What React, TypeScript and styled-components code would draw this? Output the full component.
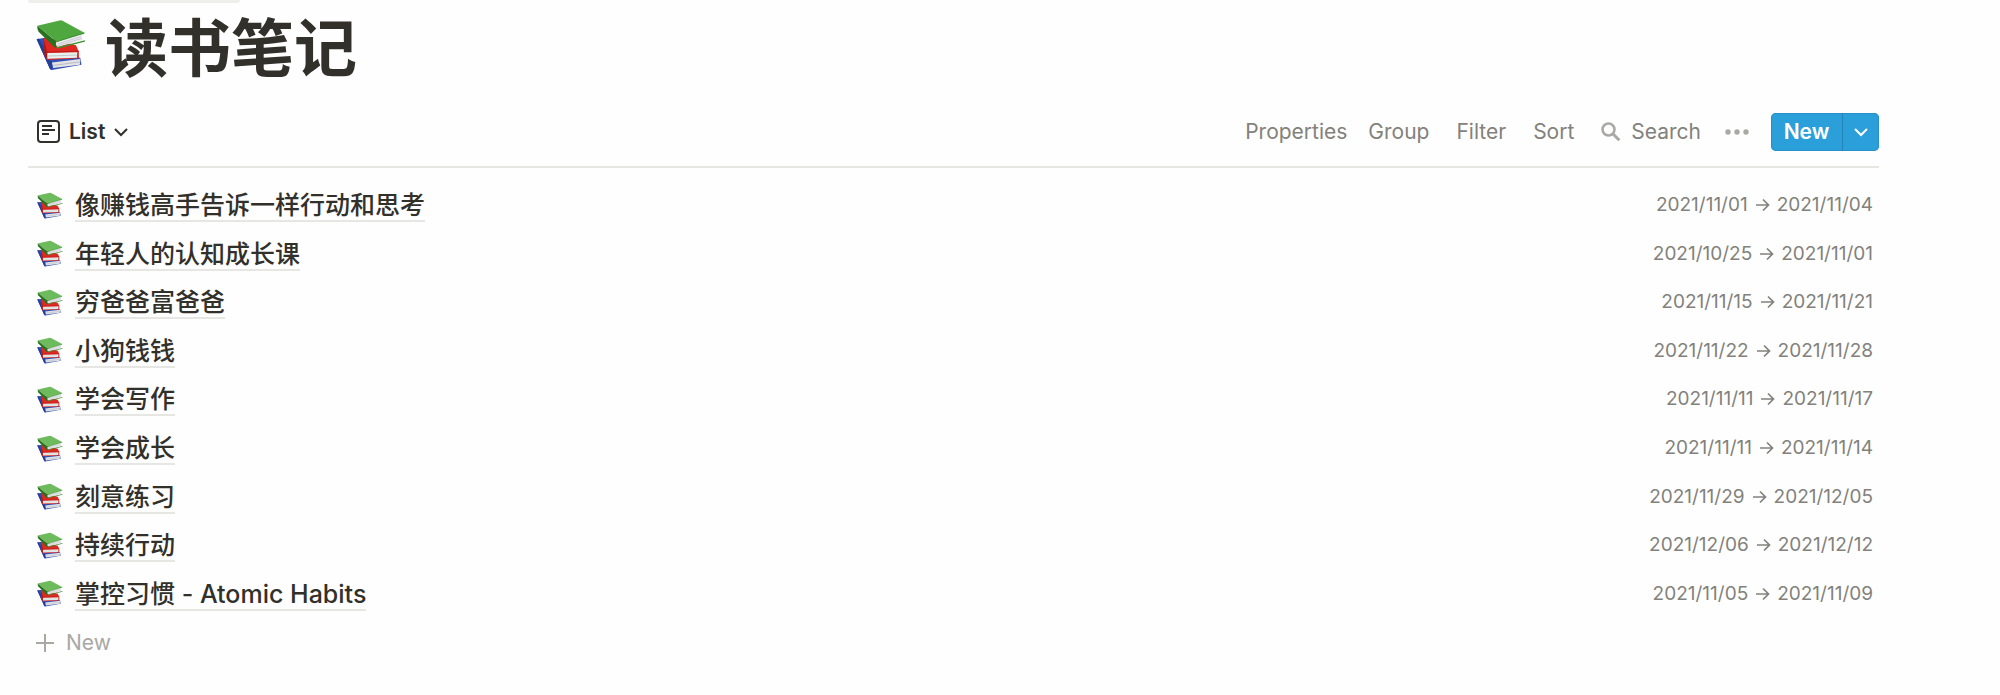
import React from "react";
import styled, { createGlobalStyle } from "styled-components";

const ink = "#32302a";
const muted = "#82817c";
const faint = "#a9a8a5";
const rule = "#e6e6e3";
const accent = "#2b9fd9";

const GlobalStyle = createGlobalStyle`
  *, *::before, *::after { box-sizing: border-box; }
  body {
    margin: 0;
    background: #fefefe;
    color: ${ink};
    font-family: Inter, "Noto Sans CJK SC", sans-serif;
    font-size: 21px;
    line-height: 32px;
  }
  button {
    font: inherit;
    color: inherit;
    background: none;
    border: 0;
    padding: 0;
    cursor: pointer;
  }
  a { color: inherit; text-decoration: none; }
  svg { display: block; flex: none; }
`;

const Page = styled.main`
  padding: 0 121px 32px 28px;
`;

const HeaderStub = styled.div`
  width: 212px;
  height: 3px;
  background: #eeeeec;
  border-radius: 0 0 5px 5px;
`;

const Title = styled.h1`
  display: flex;
  align-items: center;
  gap: 19px;
  margin: 0;
  padding: 3px 0 0 8px;
  height: 86px;
  font-size: 63px;
  line-height: 86px;
  font-weight: 700;

  svg { margin-bottom: 5px; }
`;

const Toolbar = styled.div`
  display: flex;
  align-items: center;
  justify-content: space-between;
  height: 79px;
  padding-top: 8px;
  border-bottom: 2px solid ${rule};
`;

const ViewButton = styled.button`
  display: flex;
  align-items: center;
  gap: 9px;
  padding-left: 9px;
  font-weight: 600;
`;

const Actions = styled.div`
  display: flex;
  align-items: center;
`;

const Action = styled.button<{ $gap: number }>`
  display: flex;
  align-items: center;
  gap: 10px;
  margin-right: ${(p) => p.$gap}px;
  color: ${muted};
`;

const SplitButton = styled.div`
  display: flex;
  height: 38px;
  border-radius: 5px;
  overflow: hidden;
  background: ${accent};
  box-shadow: inset 0 0 0 1px #2690c6;
  color: #fff;
`;

const NewButton = styled.button`
  width: 71px;
  font-weight: 600;
`;

const NewMenuButton = styled.button`
  display: grid;
  place-items: center;
  width: 37px;
  border-left: 1px solid #2384b5;
`;

const List = styled.ul`
  display: grid;
  grid-auto-rows: 1fr;
  min-height: 437px;
  margin: 13px 0 0;
  padding: 0;
  list-style: none;
`;

const Row = styled.li`
  display: flex;
  align-items: center;
  justify-content: space-between;
  padding: 0 6px 0 9px;
`;

const BookLink = styled.a`
  display: flex;
  align-items: center;
  gap: 12px;
`;

const BookName = styled.span`
  padding-top: 3px;
  font-size: 25px;
  line-height: 29px;
  font-weight: 500;
  border-bottom: 2px solid ${rule};
`;

const Dates = styled.span`
  display: flex;
  align-items: center;
  gap: 7px;
  font-size: 19px;
  color: ${muted};
`;

const AddRow = styled.button`
  display: flex;
  align-items: center;
  gap: 12px;
  height: 50px;
  padding-left: 8px;
  color: ${faint};
`;

function Books({ width, height, small }: { width: number; height: number; small?: boolean }) {
  const green = small ? "#6dbb5c" : "#4fa83f";
  return (
    <svg width={width} height={height} viewBox="31 38 154 158" aria-hidden="true">
      <path d="M33 99 L58 95 L168 158 L171 178 L80 194 L74 191 Z" fill="#2f50b4" />
      <path d="M33 99 L40 97 L82 175 L80 194 L74 191 Z" fill="#243f98" />
      <path d="M80 171 L168 160 L166 178 L84 188 Z" fill="#e3e3e6" />
      <path d="M83 180 L167 169" stroke="#a3a5ae" strokeWidth="2" />
      <path d="M54 96 L62 92 L154 118 L163 138 L163 158 L66 163 L58 149 Z" fill="#df2822" />
      <path d="M54 96 L66 140 L64 161 L58 149 Z" fill="#a91915" />
      <path d="M66 142 L158 139 L157 156 L66 159 Z" fill="#e9f0ee" />
      <path d="M66 151 L157 148" stroke="#a9b5b2" strokeWidth="2" />
      <path d="M62 139 L163 136" stroke="#b81a17" strokeWidth="3" />
      <path d="M35 58 L107 41 Q111 41 114 43 L180 79 L178 83 L95 107 Z" fill={green} />
      <path d="M35 58 L94 107 L94 127 L88 124 L39 76 Q34 68 35 58 Z" fill="#28721f" />
      <path d="M94 107 L176 82 Q168 90 176 101 L98 123 Q89 116 94 107 Z" fill="#ececf0" />
      <path d="M97 114 L170 91 M98 119 L171 97" stroke="#b9b9c2" strokeWidth="2" fill="none" />
      <path d="M92 125 L182 102 L181 107 L98 128 Z" fill="#3d9230" />
      <path d="M94 107 L180 80" stroke="#3b8d2f" strokeWidth="3" />
    </svg>
  );
}

function Chevron() {
  return (
    <svg width="14" height="10" viewBox="0 0 14 10" aria-hidden="true">
      <path d="M1 2 L7 8 L13 2" fill="none" stroke="currentColor" strokeWidth="2" />
    </svg>
  );
}

function ListIcon() {
  return (
    <svg width="23" height="23" viewBox="0 0 23 23" fill="none" stroke="currentColor" strokeWidth="2" aria-hidden="true">
      <rect x="1" y="1" width="21" height="21" rx="3" />
      <path d="M5 6 H15 M5 10 H18 M5 14 H12" />
    </svg>
  );
}

function SearchIcon() {
  return (
    <svg width="20" height="20" viewBox="0 0 20 20" fill="none" stroke={faint} aria-hidden="true">
      <circle cx="7.5" cy="7.5" r="6" strokeWidth="2.5" />
      <path d="M11.8 11.8 L18.3 18.3" strokeWidth="3" />
    </svg>
  );
}

function Dots() {
  return (
    <svg width="24" height="6" viewBox="0 0 24 6" fill={faint} aria-hidden="true">
      <circle cx="3" cy="3" r="2.7" />
      <circle cx="12" cy="3" r="2.7" />
      <circle cx="21" cy="3" r="2.7" />
    </svg>
  );
}

function Arrow() {
  return (
    <svg width="15" height="14" viewBox="0 0 15 14" fill="none" stroke="currentColor" strokeWidth="1.7" aria-hidden="true">
      <path d="M1 7 H13.5 M8 1.5 L13.5 7 L8 12.5" />
    </svg>
  );
}

function Plus() {
  return (
    <svg width="18" height="18" viewBox="0 0 18 18" stroke="currentColor" strokeWidth="2" aria-hidden="true">
      <path d="M9 0 V18 M0 9 H18" />
    </svg>
  );
}

const books = [
  { name: "像赚钱高手告诉一样行动和思考", from: "2021/11/01", to: "2021/11/04" },
  { name: "年轻人的认知成长课", from: "2021/10/25", to: "2021/11/01" },
  { name: "穷爸爸富爸爸", from: "2021/11/15", to: "2021/11/21" },
  { name: "小狗钱钱", from: "2021/11/22", to: "2021/11/28" },
  { name: "学会写作", from: "2021/11/11", to: "2021/11/17" },
  { name: "学会成长", from: "2021/11/11", to: "2021/11/14" },
  { name: "刻意练习", from: "2021/11/29", to: "2021/12/05" },
  { name: "持续行动", from: "2021/12/06", to: "2021/12/12" },
  { name: "掌控习惯 - Atomic Habits", from: "2021/11/05", to: "2021/11/09" },
];

export default function App() {
  return (
    <Page lang="zh-CN">
      <GlobalStyle />
      <HeaderStub />
      <Title>
        <Books width={50} height={52} />
        读书笔记
      </Title>
      <Toolbar>
        <ViewButton>
          <ListIcon />
          List
          <Chevron />
        </ViewButton>
        <Actions>
          <Action $gap={21}>Properties</Action>
          <Action $gap={27}>Group</Action>
          <Action $gap={27}>Filter</Action>
          <Action $gap={27}>Sort</Action>
          <Action $gap={24}>
            <SearchIcon />
            Search
          </Action>
          <Action $gap={22} aria-label="More options">
            <Dots />
          </Action>
          <SplitButton>
            <NewButton>New</NewButton>
            <NewMenuButton aria-label="New from template">
              <Chevron />
            </NewMenuButton>
          </SplitButton>
        </Actions>
      </Toolbar>
      <List>
        {books.map((book) => (
          <Row key={book.name}>
            <BookLink href="#">
              <Books width={26} height={27} small />
              <BookName>{book.name}</BookName>
            </BookLink>
            <Dates>
              <span>{book.from}</span>
              <Arrow />
              <span>{book.to}</span>
            </Dates>
          </Row>
        ))}
      </List>
      <AddRow>
        <Plus />
        New
      </AddRow>
    </Page>
  );
}
